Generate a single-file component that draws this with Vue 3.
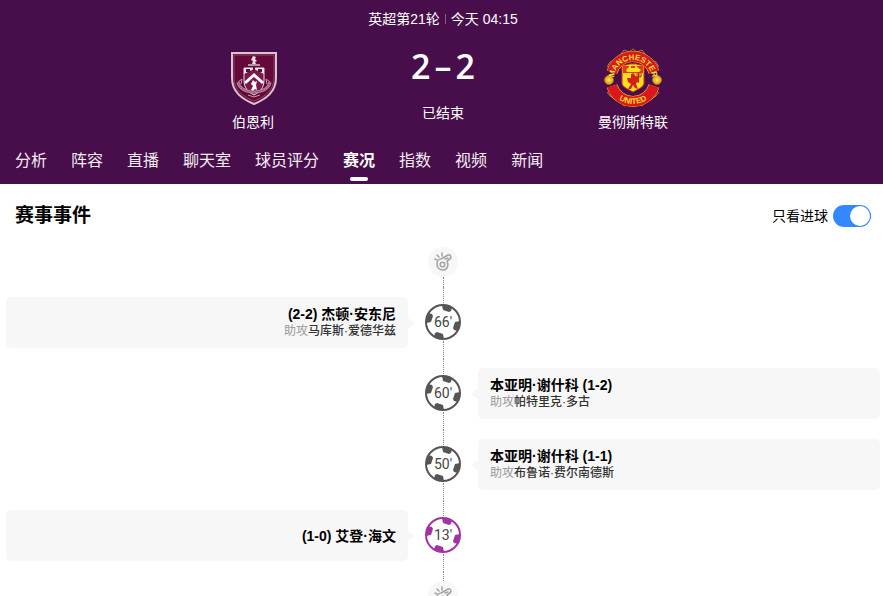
<script setup>
import { ref } from 'vue'

const tabs = ['分析', '阵容', '直播', '聊天室', '球员评分', '赛况', '指数', '视频', '新闻']
const activeTab = ref('赛况')
const goalsOnly = ref(true)

const events = [
  { minute: 66, side: 'home', score: '(2-2)', player: '杰顿·安东尼', assist: '马库斯·爱德华兹' },
  { minute: 60, side: 'away', score: '(1-2)', player: '本亚明·谢什科', assist: '帕特里克·多古' },
  { minute: 50, side: 'away', score: '(1-1)', player: '本亚明·谢什科', assist: '布鲁诺·费尔南德斯' },
  { minute: 13, side: 'home', score: '(1-0)', player: '艾登·海文', ownGoal: true },
]
const patchAngles = [0, 90, 180, 270]
</script>

<template>
  <div class="page">
    <header class="match">
      <p class="round"><span>英超第21轮</span><i class="divider"></i><span>今天 04:15</span></p>
      <div class="board">
        <div class="team">
          <svg class="crest" viewBox="0 0 60 60" aria-hidden="true">
            <path d="M9 5H53V30C53 44 43 51 31 56C19 51 9 44 9 30Z" fill="#65083a" stroke="#d9c4d0" stroke-width="2" />
            <g transform="translate(1 1)">
              <path d="M10 6H50V29C50 41 41 48 30 52C19 48 10 41 10 29Z" fill="none" stroke="#8d4569" stroke-width="1" />
              <path d="M29 7L32 8L31 10L33 12L31 13L32 15H28L29 12L27 11Z" fill="#eadde4" />
              <path d="M24 16H36" stroke="#d7bdca" stroke-width="1.5" />
              <path d="M20 19H40V31C40 39 36 43 30 46C24 43 20 39 20 31Z" fill="#791849" stroke="#eadde4" stroke-width="1" />
              <path d="M20 19H40V25L30 20L20 25Z" fill="#f1e8ed" />
              <path d="M22 20H26V23H22ZM34 20H38V23H34ZM29 18H31V22H29Z" fill="#65083a" />
              <path d="M21 34L30 26L39 34" fill="none" stroke="#fff" stroke-width="3" />
              <path d="M29 31L31 33L33 32L32 36L33 41L31 40L29 42L27 41L29 37L27 35Z" fill="#fff" />
              <path d="M14 33C15 39 21 43 30 43C39 43 45 39 46 33" fill="none" stroke="#b78aa0" stroke-width="3" />
              <path d="M14 33C15 39 21 43 30 43C39 43 45 39 46 33" fill="none" stroke="#6f2049" stroke-width="1" stroke-dasharray="1 1" />
              <path d="M14 33L18 30L17 35M46 33L42 30L43 35M24 46L30 48L36 46" fill="none" stroke="#c59bb0" stroke-width="1" />
            </g>
          </svg>
          <span class="team-name">伯恩利</span>
        </div>
        <div class="result">
          <strong class="score"><span>2</span><span>–</span><span>2</span></strong>
          <span class="status">已结束</span>
        </div>
        <div class="team">
          <svg class="crest" viewBox="0 0 60 60" aria-hidden="true">
            <defs>
              <path id="crest-upper" d="M11 31A19 19 0 0 1 49 31" />
              <path id="crest-lower" d="M5 31A25 25 0 0 0 55 31" />
            </defs>
            <path d="M18 6L21 2L26 4L30 1L34 4L39 2L42 6M18 55L21 58L26 56L30 59L34 56L39 58L42 55M4 19L7 14L11 12M56 19L53 14L49 12M4 44L7 48L11 50M56 44L53 48L49 50" fill="none" stroke="#a97b28" stroke-width="1" />
            <path d="M9 24A22 22 0 0 1 51 24M9 38A22 22 0 0 0 51 38" fill="none" stroke="#e7ba1e" stroke-width="11" />
            <path d="M9 24A22 22 0 0 1 51 24M9 38A22 22 0 0 0 51 38" fill="none" stroke="#dc161e" stroke-width="10" />
            <path d="M19 17C24 18 26 15 30 16C34 15 36 18 41 17V35C41 39 35 41 30 44C25 41 19 39 19 35Z" fill="#ffe01d" stroke="#d72b1d" stroke-width="1" />
            <path d="M20 18H40V25H20Z" fill="#e33a1d" />
            <path d="M23 22L26 19V17H28V20H32V17H34V19L38 22L36 24H24Z" fill="#ffe01d" />
            <path d="M28 26L31 25L32 28L35 29V25H36V35L34 34L33 36L35 41L32 40L30 37L28 41H25L28 36L25 34L24 30L28 30Z" fill="#d3201d" />
            <path d="M34 29V25M36 29V24M38 29V25M34 29H38" stroke="#a42d18" stroke-width="1" fill="none" />
            <circle cx="6" cy="32" r="4.500" fill="#f2b51d" stroke="#9b6b1f" />
            <circle cx="54" cy="32" r="4.500" fill="#f2b51d" stroke="#9b6b1f" />
            <path d="M4 32L6 30L8 32L6 34ZM52 32L54 30L56 32L54 34Z" fill="#ffe878" />
            <text class="crest-text"><textPath href="#crest-upper" startOffset="50%">MANCHESTER</textPath></text>
            <text class="crest-text"><textPath href="#crest-lower" startOffset="50%">UNITED</textPath></text>
          </svg>
          <span class="team-name">曼彻斯特联</span>
        </div>
      </div>
      <nav class="tabs">
        <a
          v-for="tab in tabs"
          :key="tab"
          href="#"
          class="tab"
          :class="{ active: tab === activeTab }"
          @click.prevent="activeTab = tab"
        >{{ tab }}</a>
      </nav>
    </header>

    <main>
      <div class="section-head">
        <h2>赛事事件</h2>
        <label class="filter">
          <span>只看进球</span>
          <input v-model="goalsOnly" type="checkbox" class="switch" />
        </label>
      </div>

      <section class="timeline">
        <div class="whistle">
          <svg viewBox="0 0 30 30" aria-hidden="true">
            <g fill="none" stroke="#a5a5a5" stroke-width="1.6" stroke-linejoin="round" stroke-linecap="round">
              <path d="M13 12L20 8C22 7 24 10 22 12L19 14C21 19 19 23 15 23C11 23 9 20 9 17C9 14 11 12 13 12Z" />
              <circle cx="14.500" cy="17.500" r="2.300" />
              <path d="M17 12L20 11M7 12L9 13M9 8L11 10M14 6L14 9" />
            </g>
          </svg>
        </div>
        <i class="link"></i>
        <div v-for="event in events" :key="event.minute" class="event" :class="event.side">
          <div class="card">
            <p class="player">
              <template v-if="event.side === 'home'">{{ event.score }} {{ event.player }}</template>
              <template v-else>{{ event.player }} {{ event.score }}</template>
            </p>
            <p v-if="event.assist" class="assist">助攻<b>{{ event.assist }}</b></p>
          </div>
          <div class="axis">
            <div class="ball" :class="{ own: event.ownGoal }">
              <svg viewBox="0 0 38 38" aria-hidden="true">
                <circle cx="19" cy="19" r="17" fill="#fff" stroke="currentColor" stroke-width="2" />
                <path
                  v-for="angle in patchAngles"
                  :key="angle"
                  d="M18 2L28 4L27 8L25 9L19 7Z"
                  fill="currentColor"
                  :transform="`rotate(${angle} 19 19)`"
                />
              </svg>
              <span>{{ event.minute }}'</span>
            </div>
          </div>
        </div>
        <i class="link"></i>
        <div class="whistle">
          <svg viewBox="0 0 30 30" aria-hidden="true">
            <g fill="none" stroke="#a5a5a5" stroke-width="1.6" stroke-linejoin="round" stroke-linecap="round">
              <path d="M13 12L20 8C22 7 24 10 22 12L19 14C21 19 19 23 15 23C11 23 9 20 9 17C9 14 11 12 13 12Z" />
              <circle cx="14.500" cy="17.500" r="2.300" />
              <path d="M17 12L20 11M7 12L9 13M9 8L11 10M14 6L14 9" />
            </g>
          </svg>
        </div>
      </section>
    </main>
  </div>
</template>

<style>
html {
  scrollbar-width: none;
  background: #fff;
}
</style>

<style scoped>
.page {
  font-family: "Liberation Sans", "Noto Sans CJK SC", sans-serif;
  font-size: 14px;
  line-height: 20px;
  color: #000;
}
p,
h2 {
  margin: 0;
}
.match {
  background: #480e4b;
  color: #fff;
}
.round {
  display: flex;
  justify-content: center;
  align-items: center;
  gap: 5px;
  padding: 9px 0 0 3px;
}
.divider {
  width: 1px;
  height: 10px;
  background: #85608a;
}
.board {
  display: grid;
  grid-template-columns: repeat(3, 190px);
  justify-content: center;
  padding: 19px 0 0 3px;
}
.team,
.result {
  display: flex;
  flex-direction: column;
  align-items: center;
}
.crest {
  width: 60px;
  height: 60px;
}
.crest-text {
  font-size: 8px;
  font-weight: 700;
  fill: #ffe21f;
  text-anchor: middle;
}
.team-name {
  margin-top: 4px;
}
.score {
  display: flex;
  gap: 4px;
  font-family: "Open Sans", sans-serif;
  font-size: 34px;
  font-weight: 600;
  line-height: 36px;
}
.status {
  margin-top: 19px;
}
.tabs {
  display: flex;
  gap: 24px;
  padding: 16px 15px 0;
}
.tab {
  position: relative;
  height: 36px;
  line-height: 26px;
  font-size: 16px;
  color: #f3edf3;
  text-decoration: none;
}
.tab.active {
  color: #fff;
  font-weight: 700;
}
.tab.active::after {
  content: "";
  position: absolute;
  left: 50%;
  bottom: 3px;
  width: 18px;
  height: 4px;
  margin-left: -9px;
  border-radius: 2px;
  background: #fff;
}
.section-head {
  display: flex;
  justify-content: space-between;
  align-items: center;
  height: 63px;
  padding: 0 12px 0 15px;
}
h2 {
  font-size: 19px;
  line-height: 29px;
}
.filter {
  display: flex;
  align-items: center;
  gap: 5px;
}
.switch {
  appearance: none;
  display: flex;
  justify-content: flex-start;
  width: 38px;
  height: 22px;
  margin: 0;
  padding: 1px;
  box-sizing: border-box;
  border-radius: 11px;
  background: #ccc;
}
.switch:checked {
  justify-content: flex-end;
  background: #3388ff;
}
.switch::before {
  content: "";
  width: 20px;
  height: 20px;
  border-radius: 50%;
  background: #fff;
}
.timeline {
  display: flex;
  flex-direction: column;
  align-items: center;
  padding: 0 3px 0 6px;
}
.whistle {
  width: 30px;
  height: 30px;
  border-radius: 50%;
  background: #f7f7f7;
}
.whistle svg {
  display: block;
}
.link {
  height: 10px;
  border-left: 1px dotted #888;
}
.event {
  display: grid;
  grid-template-columns: 1fr 70px 1fr;
  width: 100%;
}
.card {
  position: relative;
  display: flex;
  flex-direction: column;
  justify-content: center;
  grid-row: 1;
  min-height: 35px;
  margin: 10px 0;
  padding: 8px 12px;
  border-radius: 5px;
  background: #f7f7f7;
}
.home .card {
  grid-column: 1;
  text-align: right;
}
.away .card {
  grid-column: 3;
}
.card::after {
  content: "";
  position: absolute;
  top: 50%;
  margin-top: -5px;
  border: solid transparent;
  border-width: 5px 7px;
}
.home .card::after {
  left: 100%;
  border-left-color: #f7f7f7;
}
.away .card::after {
  right: 100%;
  border-right-color: #f7f7f7;
}
.player {
  font-weight: 700;
  line-height: 18px;
}
.assist {
  font-size: 12px;
  line-height: 17px;
  color: #999;
}
.assist b {
  font-weight: 500;
  color: #333;
}
.axis {
  grid-column: 2;
  grid-row: 1;
  display: flex;
  flex-direction: column;
  align-items: center;
  padding-bottom: 1px;
}
.axis::before,
.axis::after {
  content: "";
  flex: 1;
  border-left: 1px dotted #888;
}
.ball {
  display: grid;
  place-items: center;
  color: #555;
}
.ball svg,
.ball span {
  grid-area: 1 / 1;
}
.ball svg {
  width: 38px;
  height: 38px;
}
.ball span {
  font-family: Roboto, sans-serif;
  color: #444;
}
.ball.own {
  color: #9f35a5;
}
</style>
